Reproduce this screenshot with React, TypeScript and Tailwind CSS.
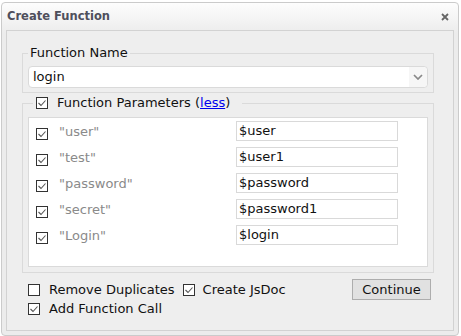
import React from "react";

function Box({ checked }: { checked?: boolean }) {
  return (
    <svg width="12" height="12" viewBox="0 0 12 12" className="shrink-0">
      <rect x="0.5" y="0.5" width="11" height="11" fill="#fff" stroke="#333" />
      {checked && (
        <polyline points="2.5,6 5,8.5 9.5,3.5" fill="none" stroke="#555" strokeWidth="1.1" />
      )}
    </svg>
  );
}

const params = [
  { name: '"user"', value: "$user" },
  { name: '"test"', value: "$user1" },
  { name: '"password"', value: "$password" },
  { name: '"secret"', value: "$password1" },
  { name: '"Login"', value: "$login" },
];

export default function App() {
  return (
    <div className="w-[461px] h-[336px] bg-white font-['DejaVu_Sans',sans-serif] text-[13px] text-[#111]">
      <div className="ml-[1px] mt-[2px] w-[458px] h-[334px] border border-[#cbcbcb] rounded-[4px] bg-[linear-gradient(#fdfdfd,#ececec_30px)] flex flex-col">
        <div className="h-[27px] flex items-center justify-between pl-[5px] pr-[9px]">
          <span className="text-[11.5px] font-bold text-[#4f4f5c]">Create Function</span>
          <svg width="8" height="8" viewBox="0 0 8 8">
            <path d="M1 1 L7 7 M7 1 L1 7" stroke="#666" strokeWidth="1.8" />
          </svg>
        </div>

        <div className="mx-[4px] h-[301px] border border-[#d2d2d2] bg-[#eeeeee] pt-[14px]">
          <fieldset className="ml-[15px] w-[412px] border border-[#dadada] px-[5px] pt-[5px] pb-[4px]">
            <legend className="px-[2px] leading-[16px]">Function Name</legend>
            <div className="h-[22px] bg-white border border-[#dadada] rounded-[4px] flex items-center justify-between">
              <span className="pl-[4px]">login</span>
              <div className="h-full w-[18px] bg-[#f6f6f6] rounded-r-[4px] flex items-center justify-center">
                <svg width="10" height="6" viewBox="0 0 10 6">
                  <polyline points="1,1 5,5 9,1" fill="none" stroke="#888" strokeWidth="1.7" />
                </svg>
              </div>
            </div>
          </fieldset>

          <fieldset className="mt-[2px] ml-[15px] w-[412px] border border-[#dadada] px-[5px] pt-[6px] pb-[5px]">
            <legend className="ml-[5px] pl-[3px] pr-[12px] leading-[16px]">
              <span className="flex items-center gap-[9px]">
                <Box checked />
                <span>
                  Function Parameters (<span className="text-[#0000ee] underline">less</span>)
                </span>
              </span>
            </legend>
            <div className="h-[150px] bg-white border border-[#dadada] pt-[3px] flex flex-col gap-[6px]">
              {params.map((p) => (
                <div key={p.value} className="h-[20px] flex items-center pl-[7px]">
                  <div className="mt-[6px]">
                    <Box checked />
                  </div>
                  <span className="ml-[11px] w-[177px] text-[#8a8a8a] mt-[1px]">{p.name}</span>
                  <div className="w-[162px] h-[20px] border border-[#d9d9d9] pl-[2px] flex items-center">
                    {p.value}
                  </div>
                </div>
              ))}
            </div>
          </fieldset>

          <div className="mt-[6px] ml-[21px] w-[403px] flex items-start justify-between">
            <div className="flex flex-col mt-[1px]">
              <div className="h-[19px] flex items-center">
                <Box />
                <span className="ml-[9px]">Remove Duplicates</span>
                <span className="ml-[8px]">
                  <Box checked />
                </span>
                <span className="ml-[8px]">Create JsDoc</span>
              </div>
              <div className="h-[19px] flex items-center">
                <Box checked />
                <span className="ml-[9px]">Add Function Call</span>
              </div>
            </div>
            <button className="w-[79px] h-[21px] bg-[#e1e1e1] border border-[#adadad] text-[13px] leading-none flex items-center justify-center">
              Continue
            </button>
          </div>
        </div>
      </div>
    </div>
  );
}
